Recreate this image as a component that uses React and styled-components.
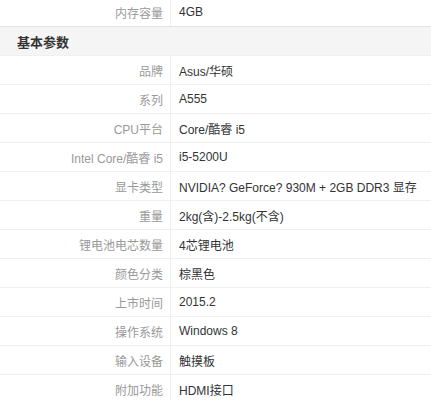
import React from 'react';
import styled, { createGlobalStyle } from 'styled-components';

const GlobalStyle = createGlobalStyle`
  body {
    margin: 0;
    background: #fff;
    font-family: "Liberation Sans", "Noto Sans CJK SC", sans-serif;
    font-size: 12px;
  }
`;

const topRow = [{ label: '内存容量', value: '4GB' }];

const baseParams = [
  { label: '品牌', value: 'Asus/华硕' },
  { label: '系列', value: 'A555' },
  { label: 'CPU平台', value: 'Core/酷睿 i5' },
  { label: 'Intel Core/酷睿 i5', value: 'i5-5200U' },
  { label: '显卡类型', value: 'NVIDIA? GeForce? 930M + 2GB DDR3 显存' },
  { label: '重量', value: '2kg(含)-2.5kg(不含)' },
  { label: '锂电池电芯数量', value: '4芯锂电池' },
  { label: '颜色分类', value: '棕黑色' },
  { label: '上市时间', value: '2015.2' },
  { label: '操作系统', value: 'Windows 8' },
  { label: '输入设备', value: '触摸板' },
  { label: '附加功能', value: 'HDMI接口' },
];

const App = () => {
  return (
    <>
      <GlobalStyle />
      <Table>
        {topRow.map((row) => (
          <Row key={row.label}>
            <Label>{row.label}</Label>
            <Value>{row.value}</Value>
          </Row>
        ))}
        <GroupHeader>基本参数</GroupHeader>
        {baseParams.map((row) => (
          <Row key={row.label}>
            <Label>{row.label}</Label>
            <Value>{row.value}</Value>
          </Row>
        ))}
      </Table>
    </>
  );
};

const Table = styled.div`
  margin-top: -2px;
  width: 431px;
`;

const Row = styled.div`
  display: flex;
  height: 28px;
  border-bottom: 1px solid #f0f0f0;
`;

const Label = styled.div`
  width: 163px;
  flex-shrink: 0;
  padding-right: 7px;
  border-right: 1px solid #f0f0f0;
  box-sizing: content-box;
  display: flex;
  align-items: center;
  justify-content: flex-end;
  color: #999;
  white-space: nowrap;
`;

const Value = styled.div`
  padding-left: 8px;
  display: flex;
  align-items: center;
  color: #333;
  white-space: nowrap;
`;

const GroupHeader = styled.div`
  height: 28px;
  margin-top: -1px;
  border-top: 1px solid #e3e3e3;
  border-bottom: 1px solid #f0f0f0;
  background-color: #f5f5f5;
  padding-left: 17px;
  display: flex;
  align-items: center;
  font-size: 13px;
  font-weight: bold;
  color: #333;
`;

export default App;
